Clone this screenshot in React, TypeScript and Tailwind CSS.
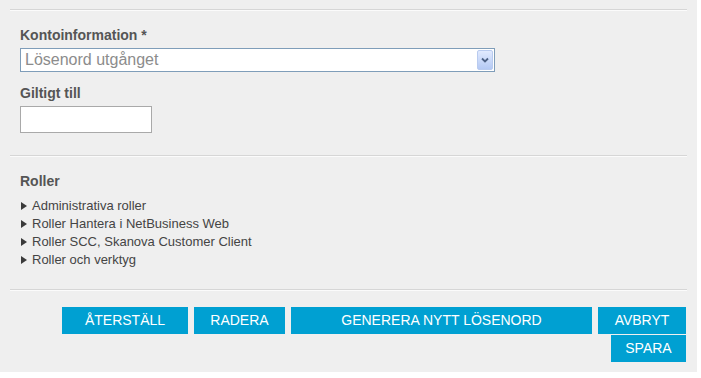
import React from 'react';

const roles = [
  'Administrativa roller',
  'Roller Hantera i NetBusiness Web',
  'Roller SCC, Skanova Customer Client',
  'Roller och verktyg',
];

const Divider: React.FC = () => (
  <div className="mx-[10px] h-[2px] border-t border-b border-t-[#d6d6d6] border-b-[#fbfbfb]"></div>
);

const App: React.FC = () => {
  return (
    <div className="min-h-screen bg-white font-['Liberation_Sans',Arial,sans-serif]">
      <div className="w-[697px] h-[372px] bg-[#efefef] pt-[9px]">
        <Divider />

        {/* Account info */}
        <div className="px-[20px] pt-[16px]">
          <div className="text-[14px] leading-[16px] font-bold text-[#555555]">Kontoinformation *</div>
          <div className="mt-[5px] w-[475px] h-[24px] bg-white border border-[#7f9db9] flex items-center justify-between">
            <span className="pl-[4px] text-[16px] leading-[20px] text-[#8c8c8c]">Lösenord utgånget</span>
            <div className="mr-[1px] w-[16px] h-[20px] rounded-[2px] border border-[#b9cbef] bg-gradient-to-b from-[#e1eafe] to-[#b4c9f4] flex items-center justify-center">
              <svg width="8" height="6" viewBox="0 0 8 6">
                <path d="M1 1.5 L4 4.5 L7 1.5" fill="none" stroke="#4d6185" strokeWidth="1.8" />
              </svg>
            </div>
          </div>

          <div className="mt-[13px] text-[14px] leading-[16px] font-bold text-[#555555]">Giltigt till</div>
          <div className="mt-[5px] w-[132px] h-[27px] bg-white border border-[#a9a9a9]"></div>
        </div>

        <div className="mt-[22px]">
          <Divider />
        </div>

        {/* Roles */}
        <div className="px-[20px] pt-[16px]">
          <div className="text-[14px] leading-[17px] font-bold text-[#555555]">Roller</div>
          <ul className="mt-[7px]">
            {roles.map((r) => (
              <li key={r} className="flex items-center text-[13px] leading-[18px] text-[#444444]">
                <svg width="6" height="8" viewBox="0 0 6 8" className="ml-[1px] mr-[5px] shrink-0">
                  <path d="M0 0 L6 4 L0 8 Z" fill="#3a3a3a" />
                </svg>
                <span>{r}</span>
              </li>
            ))}
          </ul>
        </div>

        <div className="mt-[20px]">
          <Divider />
        </div>

        {/* Actions */}
        <div className="mt-[16px] pl-[62px] flex items-start gap-[6px] text-[14px] text-white">
          <div className="w-[126px] h-[27px] bg-[#00a0d2] flex items-center justify-center">ÅTERSTÄLL</div>
          <div className="w-[91px] h-[27px] bg-[#00a0d2] flex items-center justify-center">RADERA</div>
          <div className="w-[301px] h-[27px] bg-[#00a0d2] flex items-center justify-center">GENERERA NYTT LÖSENORD</div>
          <div className="flex flex-col items-end gap-[1px]">
            <div className="w-[88px] h-[27px] bg-[#00a0d2] flex items-center justify-center">AVBRYT</div>
            <div className="w-[75px] h-[27px] bg-[#00a0d2] flex items-center justify-center">SPARA</div>
          </div>
        </div>
      </div>
    </div>
  );
};

export default App;
